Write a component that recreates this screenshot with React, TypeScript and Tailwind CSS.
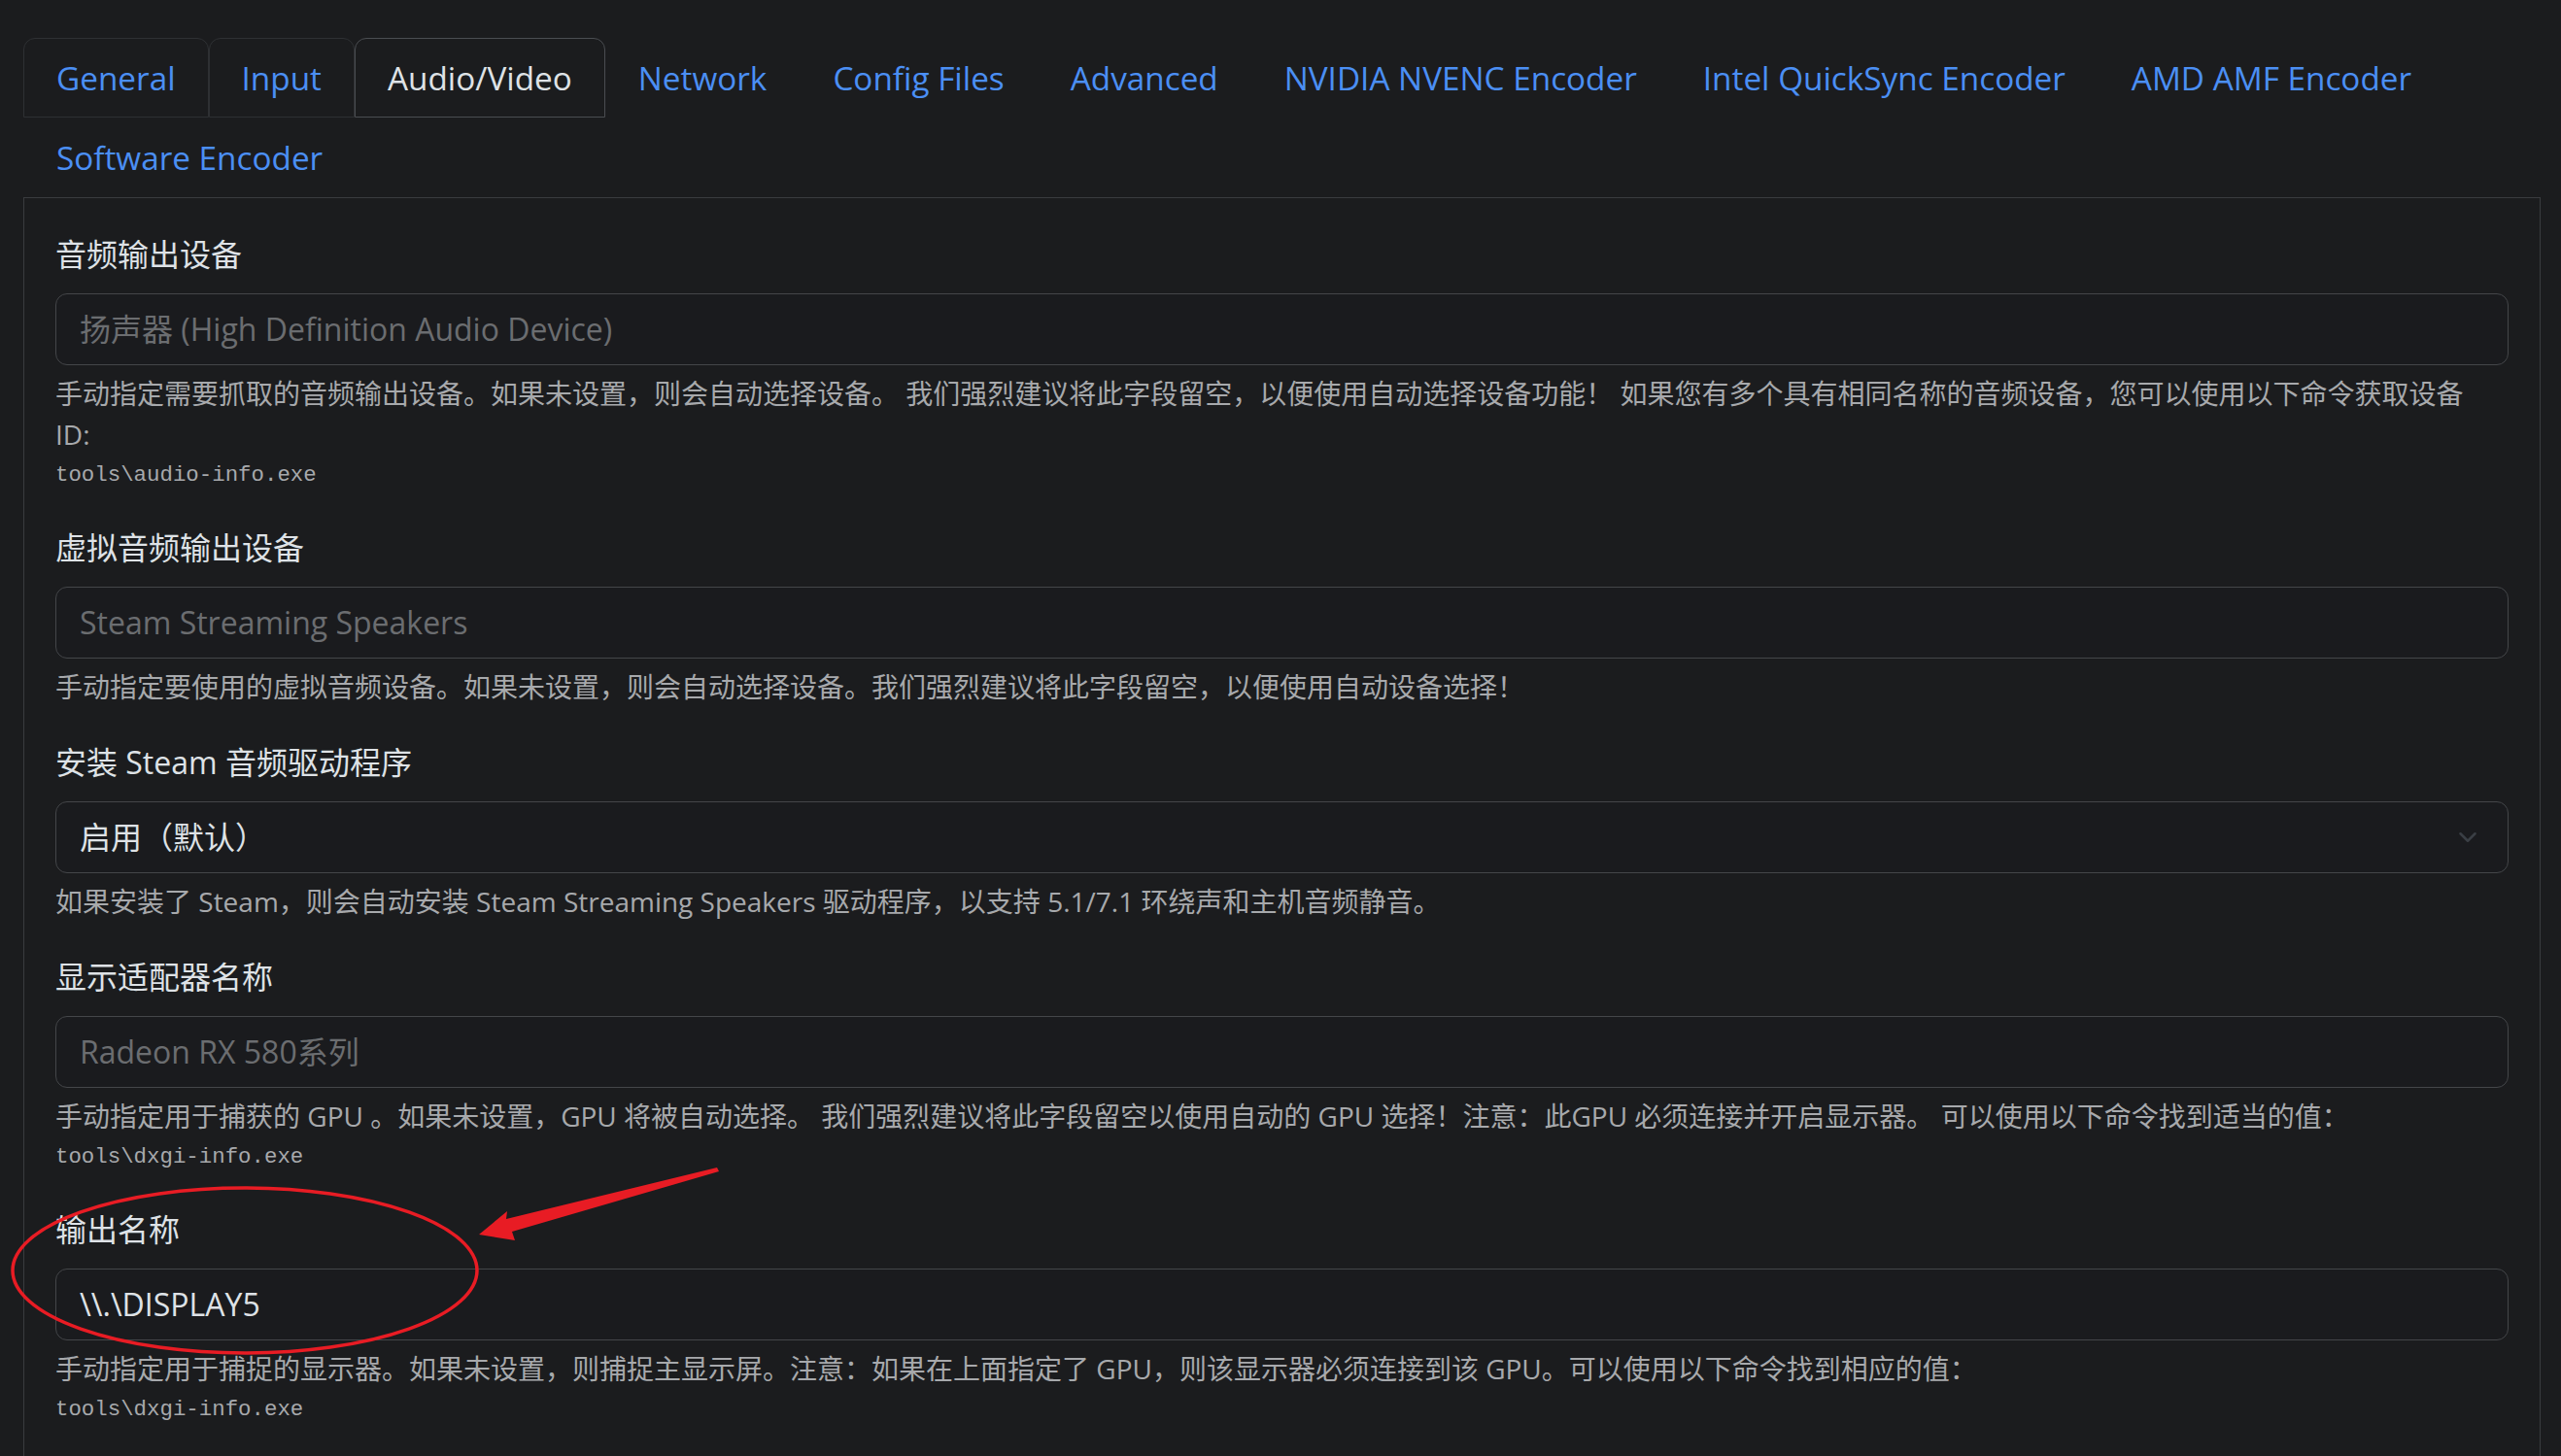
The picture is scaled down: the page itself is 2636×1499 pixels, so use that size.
import type { ReactNode } from "react";
import { ChevronDown } from "lucide-react";

const tabs = [
  { label: "General", bordered: true },
  { label: "Input", bordered: true },
  { label: "Audio/Video", active: true },
  { label: "Network" },
  { label: "Config Files" },
  { label: "Advanced" },
  { label: "NVIDIA NVENC Encoder" },
  { label: "Intel QuickSync Encoder" },
  { label: "AMD AMF Encoder" },
  { label: "Software Encoder" },
];

interface FieldProps {
  label: string;
  placeholder?: string;
  value?: string;
  select?: boolean;
  help: ReactNode;
  code?: string;
}

function Field({ label, placeholder, value, select, help, code }: FieldProps) {
  return (
    <div className="mb-[33px]">
      <div className="mb-[16px] text-[32px] leading-[48px] text-[#dee2e6]">{label}</div>
      <div className="relative flex h-[74px] items-center rounded-[12px] border border-[#444649] bg-[#1a1b1e] px-[24px] text-[32px] leading-[48px]">
        {value ? (
          <span className="text-[#dee2e6]">{value}</span>
        ) : (
          <span className="text-[#6b6d70]">{placeholder}</span>
        )}
        {select && (
          <ChevronDown
            className="absolute right-[26px] top-1/2 h-[30px] w-[30px] -translate-y-1/2 text-[#3a3f45]"
            strokeWidth={2}
          />
        )}
      </div>
      <div className="mt-[8px] text-[28px] leading-[42px] text-[#a7a9ac]">
        <div>{help}</div>
        {code && (
          <code className="block pt-[4px] font-['Liberation_Mono',monospace] text-[22.4px] leading-[35px] text-[#a7a9ac]">
            {code}
          </code>
        )}
      </div>
    </div>
  );
}

export default function App() {
  return (
    <div className="relative h-[1499px] overflow-hidden bg-[#1b1c1e] pl-[24px] pr-[21px] pt-[39px] font-['Open_Sans','Noto_Sans_CJK_SC',sans-serif]">
      {/* Tabs */}
      <ul className="flex flex-wrap">
        {tabs.map((t) => (
          <li
            key={t.label}
            className={
              "h-[82px] rounded-t-[12px] border px-[33px] text-[33.3px] leading-[80px] " +
              (t.active
                ? "border-[#4a4d51] text-[#dee2e6]"
                : t.bordered
                  ? "border-[#2e3033] text-[#4b8ff4]"
                  : "border-transparent text-[#4b8ff4]")
            }
          >
            {t.label}
          </li>
        ))}
      </ul>

      {/* Panel */}
      <div className="border border-[#3a3c3f] px-[32px] pb-[32px] pt-[34px]">
        <Field
          label="音频输出设备"
          placeholder="扬声器 (High Definition Audio Device)"
          help={
            <>
              手动指定需要抓取的音频输出设备。如果未设置，则会自动选择设备。 我们强烈建议将此字段留空，以便使用自动选择设备功能！ 如果您有多个具有相同名称的音频设备，您可以使用以下命令获取设备
              <br />
              ID:
            </>
          }
          code="tools\audio-info.exe"
        />
        <Field
          label="虚拟音频输出设备"
          placeholder="Steam Streaming Speakers"
          help="手动指定要使用的虚拟音频设备。如果未设置，则会自动选择设备。我们强烈建议将此字段留空，以便使用自动设备选择！"
        />
        <Field
          label="安装 Steam 音频驱动程序"
          value="启用（默认）"
          select
          help="如果安装了 Steam，则会自动安装 Steam Streaming Speakers 驱动程序，以支持 5.1/7.1 环绕声和主机音频静音。"
        />
        <Field
          label="显示适配器名称"
          placeholder="Radeon RX 580系列"
          help="手动指定用于捕获的 GPU 。如果未设置，GPU 将被自动选择。 我们强烈建议将此字段留空以使用自动的 GPU 选择！注意：此GPU 必须连接并开启显示器。 可以使用以下命令找到适当的值："
          code="tools\dxgi-info.exe"
        />
        <Field
          label="输出名称"
          value="\\.\DISPLAY5"
          help="手动指定用于捕捉的显示器。如果未设置，则捕捉主显示屏。注意：如果在上面指定了 GPU，则该显示器必须连接到该 GPU。可以使用以下命令找到相应的值："
          code="tools\dxgi-info.exe"
        />
      </div>

      {/* Red annotation */}
      <svg className="pointer-events-none absolute left-0 top-0" width="2636" height="1499">
        <ellipse cx="252" cy="1308" rx="239" ry="85" fill="none" stroke="#e81c24" strokeWidth="3.5" />
        <polygon
          points="738,1202 740,1206 527,1268 530,1277 493,1271 522,1247 521,1255"
          fill="#e81c24"
        />
      </svg>
    </div>
  );
}
